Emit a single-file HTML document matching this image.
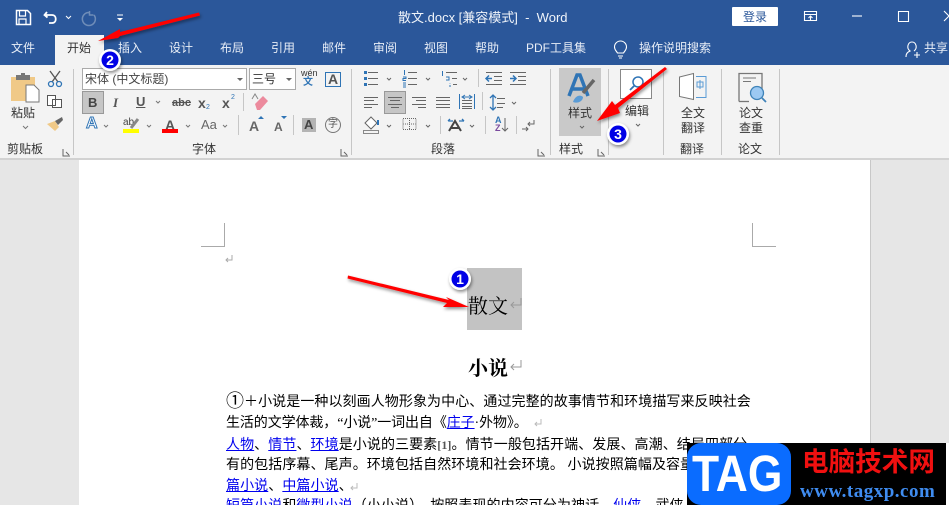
<!DOCTYPE html>
<html><head><meta charset="utf-8"><style>
*{margin:0;padding:0;box-sizing:border-box}
html,body{width:949px;height:505px;overflow:hidden;background:#e6e6e6}
body{position:relative;font-family:"Liberation Sans","Noto Sans CJK SC",sans-serif;color:#333}
.a{position:absolute}
.t{position:absolute;white-space:nowrap;line-height:16px;font-size:12px;color:#333}
.w{color:#f0f4fa}
.tab{position:absolute;top:40px;white-space:nowrap;line-height:16px;font-size:12px;color:#e8eef7}
.sep{position:absolute;width:1px;background:#c6c6c6}
.d{position:absolute;white-space:nowrap;left:226px;font-size:14px;line-height:20px;color:#000;letter-spacing:.08px;font-family:"Liberation Serif","Noto Sans CJK SC",sans-serif}
.d a{color:#0000ee;text-decoration:underline}
.c{display:inline-block;width:18px;font-size:18px;line-height:14px;vertical-align:-1px}
svg{position:absolute;overflow:visible}
</style></head><body>
<div class="a" style="left:0;top:0;width:949px;height:65px;background:#2b579a"></div>
<div class="a" style="left:55px;top:35px;width:49px;height:30px;background:#f3f3f3"></div>
<div class="a" style="left:0;top:65px;width:949px;height:93px;background:#f3f3f3"></div>
<div class="a" style="left:0;top:158px;width:949px;height:2px;background:#d2d2d2"></div>
<div class="a" style="left:79px;top:160px;width:791px;height:345px;background:#fff"></div>
<div class="a" style="left:870px;top:160px;width:1px;height:345px;background:#c8c8c8"></div>

<svg width="949" height="65" style="left:0;top:0" fill="none" stroke="#fff" stroke-width="1.500">
<path d="M16.500 10.500h11l3 3v11h-14z"/><path d="M19.500 11v5h6v-5M19 24v-5h7v5" stroke-width="1.200"/>
<path d="M47 12l-2.500 3 3 2.500M45 15h7c5 0 5 8 0 8h-3" stroke-width="1.800"/>
<path d="M66 16l2.500 2.500 2.500-2.500" stroke-width="1"/>
<path d="M89 12.500a6.500 6.500 0 1 0 5 2.500M89.500 11v4h4" stroke="#6f8db8" stroke-width="1.500"/>
<path d="M117 15h6" stroke-width="1"/><path d="M117 18h6l-3 3z" fill="#fff" stroke="none"/>
<path d="M804.500 11.500h12v9h-12zM804.500 14.500h12M810.500 20v-4M808.500 18l2-2 2 2" stroke-width="1.100"/>
<path d="M852 16h10" stroke-width="1.100"/><path d="M898.500 11.500h10v10h-10z" stroke-width="1.100"/>
<path d="M944 11l5 5M944 21l5-5" stroke-width="1.100"/>
<path d="M617.500 53c-1-2-3-3-3-6a6 6 0 0 1 12 0c0 3-2 4-3 6zM618 56h5M619 58h3" stroke-width="1.100"/>
<path d="M906 57c0-4 2-5 4-6-4-3-2-9 2-9s6 6 2 9M917 52v6M914 55h6" stroke-width="1.100"/>
</svg>
<div class="t w" style="left:398px;top:10px;font-size:13px">散文.docx [兼容模式]&nbsp; -&nbsp; Word</div>
<div class="a" style="left:732px;top:7px;width:46px;height:19px;background:#fff;border-radius:1px"></div>
<div class="t" style="left:743px;top:9px;color:#2b579a">登录</div>

<div class="tab" style="left:11px">文件</div>
<div class="tab" style="left:67px;color:#333">开始</div>
<div class="tab" style="left:118px">插入</div>
<div class="tab" style="left:169px">设计</div>
<div class="tab" style="left:220px">布局</div>
<div class="tab" style="left:271px">引用</div>
<div class="tab" style="left:322px">邮件</div>
<div class="tab" style="left:373px">审阅</div>
<div class="tab" style="left:424px">视图</div>
<div class="tab" style="left:475px">帮助</div>
<div class="tab" style="left:526px">PDF工具集</div>
<div class="tab" style="left:639px">操作说明搜索</div>
<div class="tab" style="left:924px">共享</div>

<!-- separators -->
<div class="sep" style="left:73px;top:69px;height:86px"></div>
<div class="sep" style="left:351px;top:69px;height:86px"></div>
<div class="sep" style="left:550px;top:69px;height:86px"></div>
<div class="sep" style="left:608px;top:69px;height:86px"></div>
<div class="sep" style="left:663px;top:69px;height:86px"></div>
<div class="sep" style="left:721px;top:69px;height:86px"></div>
<div class="sep" style="left:779px;top:69px;height:86px"></div>
<div class="sep" style="left:243px;top:93px;height:18px"></div>
<div class="sep" style="left:238px;top:115px;height:20px"></div>
<div class="sep" style="left:293px;top:115px;height:20px"></div>
<div class="sep" style="left:478px;top:69px;height:18px"></div>
<div class="sep" style="left:482px;top:92px;height:18px"></div>
<div class="sep" style="left:440px;top:116px;height:18px"></div>
<div class="sep" style="left:485px;top:116px;height:18px"></div>
<div class="sep" style="left:516px;top:116px;height:18px"></div>

<!-- clipboard -->
<svg width="949" height="160" style="left:0;top:0" fill="none">
<path d="M11 77h24v24H11z" fill="#f0c987"/><path d="M16 75h14v5H16z" fill="#777"/><path d="M21 73h4v3h-4z" fill="#777"/>
<path d="M26 85h8l5 5v12H26z" fill="#fff" stroke="#777"/>
<path d="M50 71l8 11M60 71l-8 11" stroke="#555" stroke-width="1.300"/><circle cx="51" cy="84" r="2.500" stroke="#2f74b5" stroke-width="1.300"/><circle cx="59" cy="84" r="2.500" stroke="#2f74b5" stroke-width="1.300"/>
<path d="M47.500 95.500h8v10h-8zM52.500 99.500h9v8h-9z" fill="#fff" stroke="#555"/>
<path d="M47 124l8-3 4 6-4 4z" fill="#f0c987"/><path d="M55 121l7-4 1 3-5 5z" fill="#666"/>
<path d="M23 126l2.500 2.500 2.500-2.500" stroke="#777"/>
<path d="M63 149v7h7M66 152l3 3" stroke="#666"/><path d="M341 149v7h7M344 152l3 3" stroke="#666"/><path d="M538 149v7h7M541 152l3 3" stroke="#666"/><path d="M598 149v7h7M601 152l3 3" stroke="#666"/>
</svg>
<div class="t" style="left:11px;top:105px">粘贴</div>
<div class="t" style="left:7px;top:141px">剪贴板</div>

<!-- font box -->
<div class="a" style="left:82px;top:68px;width:165px;height:22px;background:#fff;border:1px solid #aaa"></div>
<div class="t" style="left:85px;top:71px;color:#444">宋体 (中文标题)</div>
<div class="a" style="left:249px;top:68px;width:47px;height:22px;background:#fff;border:1px solid #aaa"></div>
<div class="t" style="left:252px;top:71px;color:#333">三号</div>
<svg width="949" height="160" style="left:0;top:0" fill="none">
<path d="M237 78h6l-3 3zM286 78h6l-3 3z" fill="#666"/>
<path d="M325.500 72.500h15v14h-15z" stroke="#2f74b5"/>
</svg>
<div class="t" style="left:301px;top:68px;font-size:9px;line-height:10px">wén</div>
<div class="t" style="left:303px;top:77px;font-size:10px;line-height:11px;color:#2f74b5;font-weight:700">文</div>
<div class="t" style="left:328px;top:71px;font-size:14px;font-weight:700;color:#555">A</div>
<div class="a" style="left:82px;top:91px;width:22px;height:23px;background:#c6c6c6;border:1px solid #999"></div>
<div class="t" style="left:88px;top:95px;font-weight:700;color:#444;font-size:13px">B</div>
<div class="t" style="left:113px;top:95px;font-style:italic;font-weight:700;font-family:'Liberation Serif',serif;color:#555;font-size:13px">I</div>
<div class="t" style="left:136px;top:94px;font-weight:700;color:#555;text-decoration:underline;font-size:13px">U</div>
<div class="t" style="left:172px;top:95px;font-size:11px;font-weight:700;color:#555;text-decoration:line-through">abc</div>
<div class="t" style="left:198px;top:95px;font-weight:700;color:#555;font-size:14px">x</div><div class="t" style="left:206px;top:100px;font-size:7px;color:#2f74b5">2</div>
<div class="t" style="left:222px;top:95px;font-weight:700;color:#555;font-size:14px">x</div><div class="t" style="left:231px;top:90px;font-size:7px;color:#2f74b5">2</div>
<svg width="949" height="160" style="left:0;top:0" fill="none">
<path d="M255 104l8-8 5 5-8 9h-3z" fill="#ec8a9d"/><path d="M252 99l3-5 3 5" stroke="#888"/>
<path d="M156 101l2 2 2-2M104 125l2 2 2-2M147 125l2 2 2-2M186 125l2 2 2-2M223 125l2 2 2-2" stroke="#777"/>
</svg>
<div class="t" style="left:86px;top:116px;font-size:16px;font-weight:700;color:#fff;-webkit-text-stroke:1px #2f74b5">A</div>
<div class="t" style="left:123px;top:115px;font-size:10px;color:#444">ab</div>
<svg width="949" height="160" style="left:0;top:0" fill="none"><path d="M131 128l7-9" stroke="#888" stroke-width="3"/></svg>
<div class="a" style="left:123px;top:129px;width:16px;height:4px;background:#ff0"></div>
<div class="t" style="left:165px;top:117px;font-size:14px;font-weight:700;color:#555">A</div>
<div class="a" style="left:162px;top:129px;width:16px;height:4px;background:#f00"></div>
<div class="t" style="left:201px;top:117px;font-size:13px;color:#666">Aa</div>
<div class="t" style="left:249px;top:118px;font-size:14px;font-weight:700;color:#666">A</div>
<div class="t" style="left:274px;top:119px;font-size:12px;font-weight:700;color:#666">A</div>
<svg width="949" height="160" style="left:0;top:0" fill="none">
<path d="M258 119h6l-3-3zM281 116h6l-3 3z" fill="#2f74b5"/>
<rect x="302" y="118" width="14" height="14" fill="#b4b4b4"/>
<circle cx="333" cy="125" r="7.500" stroke="#777"/>
</svg>
<div class="t" style="left:304px;top:117px;font-size:13px;font-weight:700;color:#444">A</div>
<div class="t" style="left:328px;top:117px;font-size:10px;color:#555">字</div>
<div class="t" style="left:192px;top:141px">字体</div>

<!-- paragraph -->
<div class="a" style="left:384px;top:91px;width:22px;height:23px;background:#c6c6c6;border:1px solid #999"></div>
<svg width="949" height="160" style="left:0;top:0" fill="none" stroke="#666">
<path d="M368 72.500h10M368 78.500h10M368 84.500h10M408 72.500h9M408 78.500h9M408 84.500h9M446 72.500h11M452 78.500h5M453 84.500h4"/>
<path d="M364 71h3v3h-3zM364 77h3v3h-3zM364 83h3v3h-3z" fill="#2f74b5" stroke="none"/>
<path d="M404.500 70v5M403 77h3v1.500h-3v2h3M403 83h3M403 85h3M403 87h3M442.500 71v5M446 77h3v3h-3M450 83v0.500M450 85v2" stroke="#2f74b5"/>
<path d="M387 78l2 2 2-2M426 78l2 2 2-2M463 78l2 2 2-2M512 102l2 2 2-2M387 125l2 2 2-2M426 125l2 2 2-2M470 125l2 2 2-2"/>
<path d="M486 72.500h16M494 76.500h8M494 80.500h8M486 84.500h16M510 72.500h16M518 76.500h8M518 80.500h8M510 84.500h16"/>
<path d="M492 78.500h-6M489 75.500l-3 3 3 3M510 78.500h6M513 75.500l3 3-3 3" stroke="#2f74b5" stroke-width="1.500"/>
<path d="M364 97.500h14M364 100.500h10M364 104.500h14M364 107.500h8M388 97.500h14M390 100.500h10M388 104.500h14M391 107.500h8M412 97.500h14M416 100.500h10M412 104.500h14M418 107.500h8M436 97.500h14M436 100.500h14M436 104.500h14M436 107.500h14"/>
<path d="M459.500 94v15M474.500 94v15" stroke="#2f74b5"/>
<path d="M462 100.500h10M462 103.500h10M462 106.500h10M462 108.500h10"/>
<path d="M462 97h10M465 95l-3 2 3 2M469 95l3 2-3 2" stroke="#2f74b5"/>
<path d="M493 95v15M490 98l3-3 3 3M490 107l3 3 3-3" stroke="#2f74b5" stroke-width="1.300"/>
<path d="M497 98.500h8M497 103.500h8M497 107.500h6"/>
<path d="M363.500 130.500h15v3h-15z" stroke="#888"/>
<path d="M365 123l6-6 6 6-6 6z" fill="#fff"/><path d="M378 120v5" stroke="#2f74b5" stroke-width="2"/>
<path d="M403 118.500h13v11h-13zM409.500 118v11M403 124h13" stroke-dasharray="1 1"/>
<path d="M449 131l6-10 6 10M451 128h8" stroke="#444" stroke-width="2"/><path d="M448 121h5M459 121h5M448 121l2-2M464 121l-2-2" stroke="#2f74b5" stroke-width="1.300"/>
<path d="M505 118v13M502 128l3 3 3-3"/>
<path d="M534 120v4h-6M530 122l-2 2 2 2"/><path d="M528 129h-6M526 127l2 2-2 2"/>
</svg>
<div class="t" style="left:495px;top:116px;font-size:9px;line-height:9px;color:#2f74b5;font-weight:700">A</div>
<div class="t" style="left:495px;top:124px;font-size:9px;line-height:9px;color:#7a4a9e;font-weight:700">Z</div>
<div class="t" style="left:431px;top:141px">段落</div>

<!-- styles -->
<div class="a" style="left:559px;top:68px;width:42px;height:68px;background:#c9c9c9"></div>
<svg width="949" height="160" style="left:0;top:0" fill="none">
<path d="M569 96l8-21h3l8 21M572 89h13" stroke="#2f74b5" stroke-width="3.500"/>
<path d="M583 93l11-13" stroke="#666" stroke-width="3.500"/><path d="M573 102c2-6 7-8 10-5 0 4-5 7-10 5z" fill="#5a9bd5"/>
<path d="M580 126l2 2 2-2M636 124l2 2 2-2" stroke="#666"/>
<rect x="620.500" y="69.500" width="31" height="29" fill="#fff" stroke="#888"/>
<circle cx="638" cy="82" r="5" stroke="#2f74b5" stroke-width="1.500"/><path d="M634 86l-4 4" stroke="#2f74b5" stroke-width="1.800"/>
</svg>
<div class="t" style="left:568px;top:105px">样式</div>
<div class="t" style="left:559px;top:141px">样式</div>
<div class="t" style="left:625px;top:103px">编辑</div>

<!-- translate -->
<svg width="949" height="160" style="left:0;top:0" fill="none">
<path d="M679.500 77l14-3.500v26l-14-3z" fill="#fff" stroke="#777"/>
<path d="M696 76.500h10v21h-10" stroke="#5a9bd5"/>
<path d="M697 82h6v5h-6zM700 80v9" stroke="#5a9bd5"/>
<path d="M739 101.500v-28h23v16" stroke="#777" stroke-width="1.300"/><path d="M739 101.500h10" stroke="#777" stroke-width="1.300"/>
<path d="M743 78h13" stroke="#777"/><path d="M743 81.500h8" stroke="#777"/>
<circle cx="757" cy="93" r="6.500" fill="#9cc9f2" stroke="#3f83b8" stroke-width="1.300"/><path d="M762 98l4 4" stroke="#3f83b8" stroke-width="1.800"/>
</svg>
<div class="t" style="left:681px;top:105px">全文</div>
<div class="t" style="left:681px;top:120px">翻译</div>
<div class="t" style="left:680px;top:141px">翻译</div>
<div class="t" style="left:739px;top:105px">论文</div>
<div class="t" style="left:739px;top:120px">查重</div>
<div class="t" style="left:738px;top:141px">论文</div>

<!-- document -->
<svg width="949" height="505" style="left:0;top:0" fill="none" stroke="#aaa">
<path d="M224.500 223v23.500H201M752.500 223v23.500H776"/>
<path d="M232 255v5h-6M228 258l-2 2 2 2"/>
</svg>
<div class="a" style="left:467px;top:268px;width:55px;height:62px;background:#c3c3c3"></div>
<div class="a" style="left:468px;top:293px;font-size:20px;line-height:24px;color:#000;white-space:nowrap;font-family:'Noto Serif CJK SC',serif">散文</div>
<div class="a" style="left:468px;top:355px;font-size:20px;line-height:24px;color:#000;white-space:nowrap;font-weight:700;font-family:'Noto Serif CJK SC',serif">小说</div>
<svg width="949" height="505" style="left:0;top:0" fill="none" stroke="#999">
<path d="M521 298v7h-10M514 302l-3 3 3 3M521 360v7h-10M514 364l-3 3 3 3"/>
<path d="M541 419v5h-6M537 422l-2 2 2 2" stroke="#bbb"/>
<path d="M357 483v5h-6M353 486l-2 2 2 2" stroke="#bbb"/>
</svg>
<div class="d" style="top:393px"><span class="c">①</span>＋小说是一种以刻画人物形象为中心、通过完整的故事情节和环境描写来反映社会</div>
<div class="d" style="top:414px;letter-spacing:-.1px">生活的文学体裁，“小说”一词出自《<a>庄子</a>·外物》。</div>
<div class="d" style="top:435px"><a>人物</a>、<a>情节</a>、<a>环境</a>是小说的三要素<b style="font-size:12px;color:#555">[1]</b>。情节一般包括开端、发展、高潮、结局四部分，</div>
<div class="d" style="top:456px">有的包括序幕、尾声。环境包括自然环境和社会环境。 小说按照篇幅及容量可分为长</div>
<div class="d" style="top:477px"><a>篇小说</a>、<a>中篇小说</a>、</div>
<div class="d" style="top:497px"><a>短篇小说</a>和<a>微型小说</a>（小小说）。按照表现的内容可分为神话、<a>仙侠</a>、武侠</div>

<!-- watermark -->
<div class="a" style="left:687px;top:443px;width:259px;height:62px;background:#000"></div>
<div class="a" style="left:946px;top:443px;width:3px;height:62px;background:#fff"></div>
<div class="a" style="left:687px;top:443px;width:104px;height:62px;background:#0a6cff;border-radius:14px"></div>
<div class="a" style="left:692px;top:444px;font-size:51px;line-height:60px;font-weight:700;color:#fff;transform:scaleX(.87);transform-origin:left;font-family:'Liberation Sans',sans-serif">TAG</div>
<div class="a" style="left:802px;top:443px;font-size:26.600px;line-height:34px;font-weight:700;color:#f01010;white-space:nowrap;font-family:'Noto Sans CJK SC',sans-serif">电脑技术网</div>
<div class="a" style="left:800px;top:482px;font-size:19px;line-height:20px;font-weight:700;color:#3f8cf0;white-space:nowrap;font-family:'Liberation Serif',serif;letter-spacing:.5px">www.tagxp.com</div>

<!-- arrows and badges -->
<svg width="949" height="505" style="left:0;top:0">
<defs><filter id="s" x="-20%" y="-20%" width="140%" height="140%"><feDropShadow dx="1" dy="2" stdDeviation="1.500" flood-color="#000" flood-opacity=".45"/></filter></defs>
<g fill="#f00" filter="url(#s)">
<path d="M199 12.500L200 15.500 120 36 118 38 98 41 120 29 120 32z"/>
<path d="M348 275.500L347.500 278.500 447 303 443 307 469 307 446 297 449 300z"/>
<path d="M665 67L667 69 618 108 620 113 597 121 612 101 615 105z"/>
</g>
<g>
<circle cx="110" cy="60" r="11" fill="#fff" filter="url(#s)"/><circle cx="110" cy="60" r="8.500" fill="#0000e6"/>
<circle cx="460" cy="279" r="11" fill="#fff" filter="url(#s)"/><circle cx="460" cy="279" r="8.500" fill="#0000e6"/>
<circle cx="618" cy="134" r="11" fill="#fff" filter="url(#s)"/><circle cx="618" cy="134" r="8.500" fill="#0000e6"/>
</g>
<g fill="#fff" font-family="Liberation Sans,sans-serif" font-size="14" font-weight="700" text-anchor="middle">
<text x="110" y="65">2</text><text x="460" y="284">1</text><text x="618" y="139">3</text>
</g>
</svg>
</body></html>
